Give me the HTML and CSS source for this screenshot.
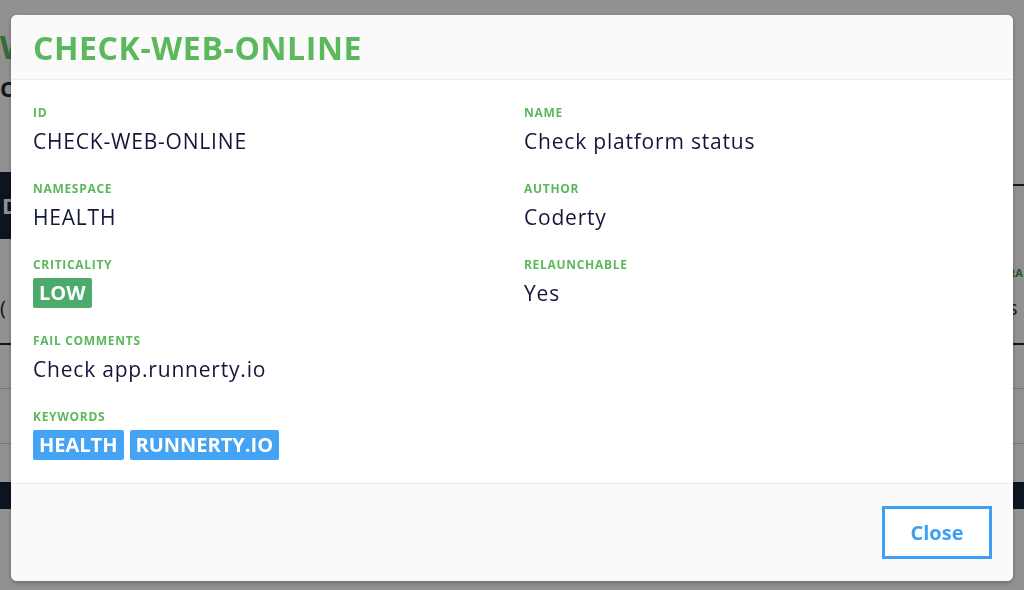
FILE: index.html
```html
<!DOCTYPE html>
<html lang="en">
<head>
    <meta charset="UTF-8">
    <meta name="viewport" content="width=device-width, initial-scale=1.0">
    <title>Check details</title>
    <link rel="stylesheet" href="styles.css">
</head>
<body>

<!-- Page behind the modal -->
<div class="page">
    <h1 class="page-title">W</h1>
    <p class="page-sub">Cl</p>

    <div class="panel">
        <div class="panel-head">
            <div class="panel-tab">D</div>
            <div class="panel-line"></div>
        </div>
        <div class="panel-row">
            <div class="panel-cell">(</div>
            <div class="panel-cell panel-cell-right">
                <span class="panel-label">RA</span>
                <span>s</span>
            </div>
        </div>
    </div>

    <div class="page-rows">
        <div class="page-row"></div>
        <div class="page-row page-row-short"></div>
        <div class="page-bar"></div>
    </div>
</div>

<!-- Check modal -->
<div class="modal">
    <div class="modal-card">
        <header class="modal-head">
            <h2 class="modal-title">CHECK-WEB-ONLINE</h2>
        </header>

        <section class="modal-body">
            <div class="columns">
                <div class="column">
                    <div class="field">
                        <div class="field-label">ID</div>
                        <div class="field-value">CHECK-WEB-ONLINE</div>
                    </div>
                    <div class="field">
                        <div class="field-label">Namespace</div>
                        <div class="field-value">HEALTH</div>
                    </div>
                    <div class="field">
                        <div class="field-label">Criticality</div>
                        <div class="tags">
                            <span class="tag tag-low">LOW</span>
                        </div>
                    </div>
                    <div class="field">
                        <div class="field-label">Fail comments</div>
                        <div class="field-value">Check app.runnerty.io</div>
                    </div>
                    <div class="field">
                        <div class="field-label">Keywords</div>
                        <div class="tags">
                            <span class="tag tag-keyword">HEALTH</span>
                            <span class="tag tag-keyword">RUNNERTY.IO</span>
                        </div>
                    </div>
                </div>

                <div class="column">
                    <div class="field">
                        <div class="field-label">Name</div>
                        <div class="field-value">Check platform status</div>
                    </div>
                    <div class="field">
                        <div class="field-label">Author</div>
                        <div class="field-value">Coderty</div>
                    </div>
                    <div class="field">
                        <div class="field-label">Relaunchable</div>
                        <div class="field-value">Yes</div>
                    </div>
                </div>
            </div>
        </section>

        <footer class="modal-foot">
            <button class="btn-close" type="button">Close</button>
        </footer>
    </div>
</div>

</body>
</html>
```

FILE: styles.css
```css
body {
    margin: 0;
    padding: 0;
    font-family: "Open Sans", "Noto Sans", sans-serif;
    color: #15173a;
    background: #fff;
    height: 100vh;
    overflow: hidden;
}

/* ---------- page behind ---------- */

.page-title {
    margin: 0;
    padding-top: 30px;
    font-size: 32px;
    line-height: 34px;
    font-weight: 700;
    color: #5cb85c;
}

.page-sub {
    margin: 10px 0 0;
    font-size: 22px;
    line-height: 28px;
    font-weight: 700;
    color: #222;
}

.panel {
    margin-top: 70px;
    border-bottom: 2px solid #14213d;
}

.panel-head {
    display: flex;
}

.panel-tab {
    width: 160px;
    height: 67px;
    line-height: 67px;
    background: #0f1c33;
    color: #fff;
    font-weight: 700;
    font-size: 22px;
    padding-left: 2px;
}

.panel-line {
    flex: 1;
    height: 2px;
    margin-top: 12px;
    background: #14213d;
}

.panel-row {
    display: flex;
    justify-content: space-between;
    padding: 20px 0 22px;
    font-size: 20px;
}

.panel-cell {
    display: flex;
    flex-direction: column;
    justify-content: flex-end;
    height: 62px;
}

.panel-cell-right {
    width: 16px;
}

.panel-label {
    font-size: 11px;
    font-weight: 700;
    color: #3a8f3a;
    margin-bottom: 14px;
}

.page-rows {
    padding-top: 43px;
}

.page-row {
    height: 54px;
    border-top: 1px solid #ccc;
}

.page-row-short {
    height: 38px;
}

.page-bar {
    height: 27px;
    background: #0f1c33;
}

/* ---------- modal ---------- */

.modal {
    position: fixed;
    inset: 0;
    background: rgba(10, 10, 10, 0.45);
    display: flex;
    align-items: flex-start;
    padding: 15px 11px;
}

.modal-card {
    width: 100%;
    background: #fff;
    border-radius: 6px;
    overflow: hidden;
    box-shadow: 0 2px 4px rgba(0, 0, 0, 0.25);
}

.modal-head {
    height: 65px;
    box-sizing: border-box;
    padding: 0 22px;
    display: flex;
    align-items: center;
    background: #fafafa;
    border-bottom: 1px solid #ececec;
}

.modal-title {
    margin: 0;
    font-size: 32px;
    font-weight: 700;
    color: #5cb85c;
    letter-spacing: 0.6px;
}

.modal-body {
    padding: 25px 22px 23px;
}

.columns {
    display: grid;
    grid-template-columns: 1fr 1fr;
    column-gap: 24px;
}

.column {
    display: flex;
    flex-direction: column;
    gap: 25px;
}

.field-label {
    font-size: 12px;
    line-height: 16px;
    font-weight: 700;
    letter-spacing: 0.7px;
    text-transform: uppercase;
    color: #5cb85c;
    margin-bottom: 5px;
}

.field-value {
    font-size: 21px;
    line-height: 30px;
    letter-spacing: 0.8px;
}

.tags {
    display: flex;
    gap: 6px;
}

.tag {
    height: 30px;
    line-height: 30px;
    padding: 0 6px;
    font-size: 20px;
    font-weight: 700;
    color: #fff;
    border-radius: 2px;
}

.tag-low {
    background: #4caa6a;
}

.tag-keyword {
    background: #44a3f5;
}

.modal-foot {
    display: flex;
    justify-content: flex-end;
    padding: 22px 21px 22px;
    background: #fafafa;
    border-top: 1px solid #ececec;
}

.btn-close {
    width: 110px;
    height: 53px;
    background: #fff;
    border: 3px solid #3f9ff3;
    color: #3f9ff3;
    font-family: inherit;
    font-size: 20px;
    font-weight: 700;
    cursor: pointer;
}
```
